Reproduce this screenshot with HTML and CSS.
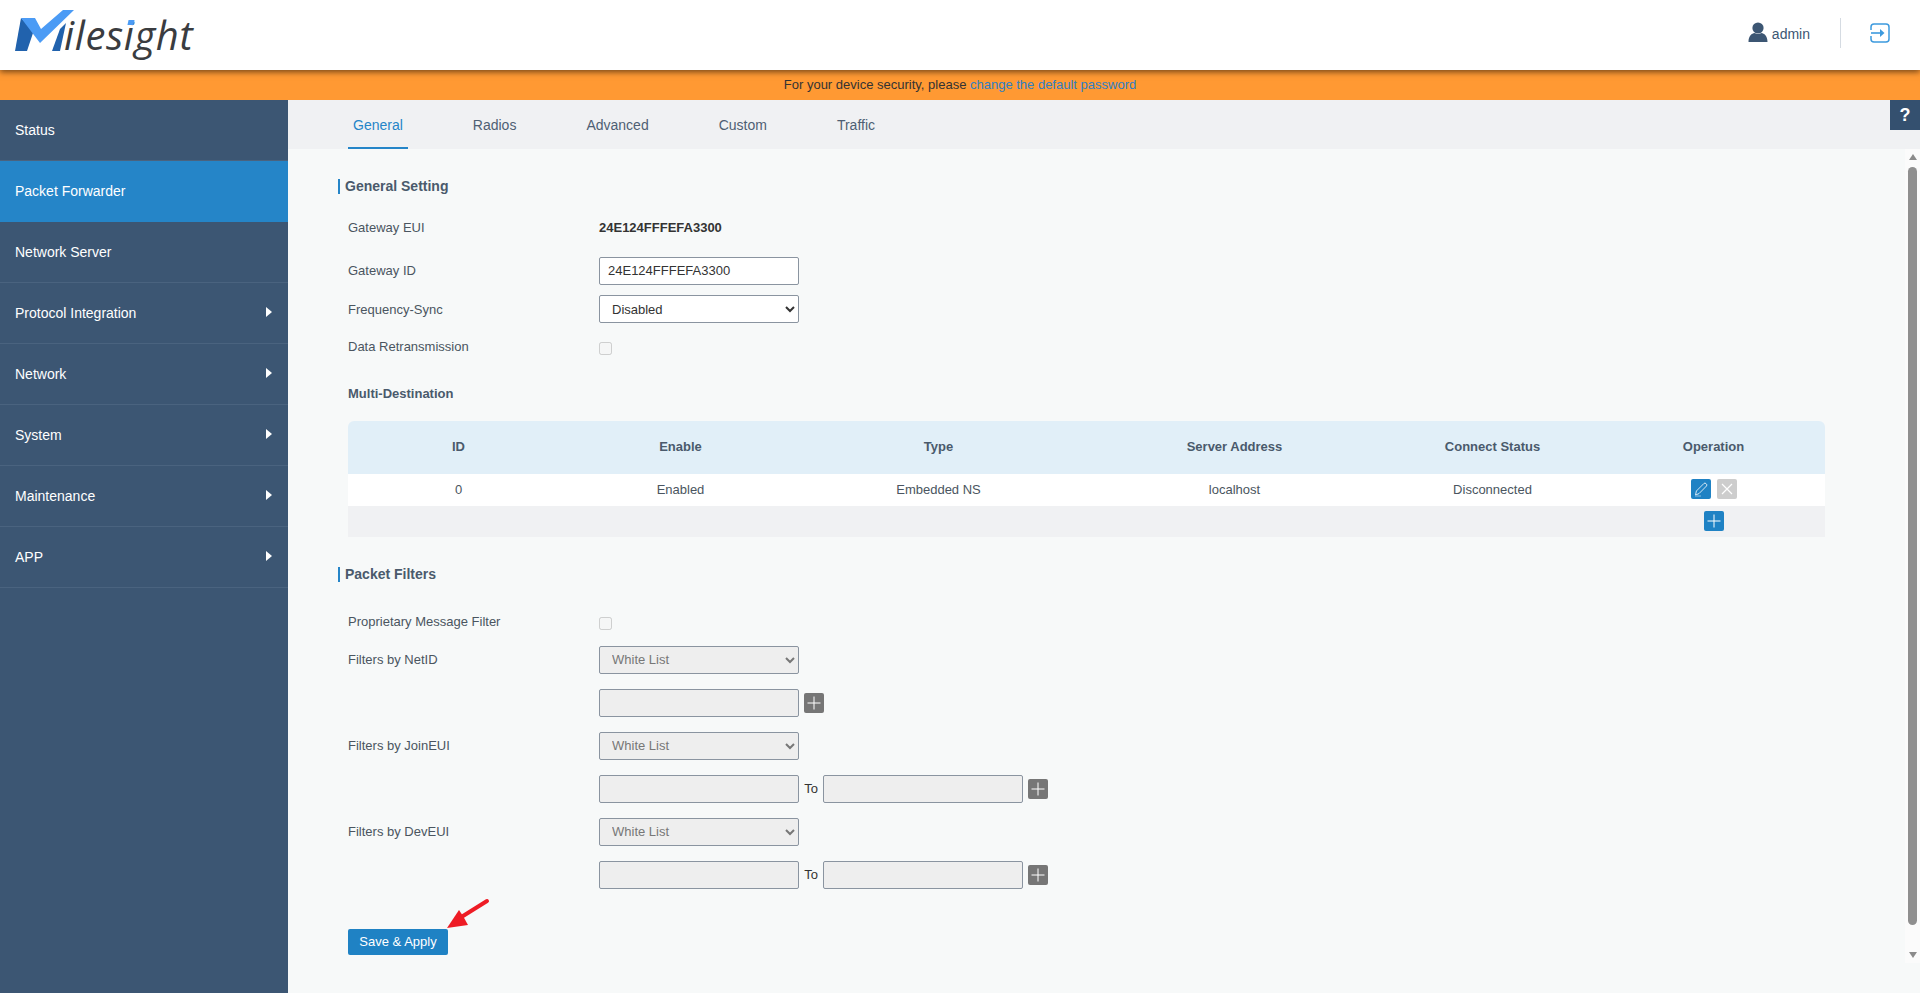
FILE: index.html
```html
<!DOCTYPE html>
<html lang="en">
<head>
<meta charset="utf-8">
<title>Milesight</title>
<link rel="stylesheet" href="styles.css">
</head>
<body>
<header class="topbar">
  <div class="logo">
    <svg class="logo-mark" viewBox="0 0 75 52" width="75" height="52">
      <polygon points="15,51 21,18 34,30 27,51" fill="#2162ad"/>
      <polygon points="52,51 60,29 66,23 60,51" fill="#2162ad"/>
      <polygon points="21,18 35,18 41,29 63,10 74,10 40,43" fill="#4b9bf5"/>
    </svg>
    <span class="logo-text">iles<span class="logo-i">i</span>ght</span>
  </div>
  <div class="user">
    <svg class="user-icon" viewBox="0 0 20 20" width="20" height="20">
      <circle cx="10" cy="6" r="5.6" fill="#3c5673"/>
      <path d="M0.5 20 C0.5 13.5 4 11.5 6.5 11 Q10 13 13.5 11 C16 11.5 19.5 13.5 19.5 20 Z" fill="#3c5673"/>
    </svg>
    <span class="user-name">admin</span>
  </div>
  <div class="divider"></div>
  <svg class="logout" viewBox="0 0 20 20" width="20" height="20">
    <path d="M1 7 V4 Q1 1 4 1 H16 Q19 1 19 4 V16 Q19 19 16 19 H4 Q1 19 1 16 V13" fill="none" stroke="#3d9ade" stroke-width="1.5"/>
    <path d="M1 10 H13" fill="none" stroke="#3d9ade" stroke-width="1.6"/>
    <path d="M10 6 L14.5 10 L10 14 Z" fill="#3d9ade"/>
  </svg>
</header>
<div class="notice">For your device security, please <a class="notice-link">change the default password</a></div>
<div class="main">
  <nav class="sidebar">
    <div class="nav-item">Status</div>
    <div class="nav-item active">Packet Forwarder</div>
    <div class="nav-item">Network Server</div>
    <div class="nav-item has-sub">Protocol Integration</div>
    <div class="nav-item has-sub">Network</div>
    <div class="nav-item has-sub">System</div>
    <div class="nav-item has-sub">Maintenance</div>
    <div class="nav-item has-sub">APP</div>
  </nav>
  <div class="content">
    <div class="tabs">
      <div class="tab active">General</div>
      <div class="tab">Radios</div>
      <div class="tab">Advanced</div>
      <div class="tab">Custom</div>
      <div class="tab">Traffic</div>
    </div>
    <div class="help">?</div>
    <div class="pane">
      <div class="form">
        <h2 class="section first">General Setting</h2>
        <div class="row eui"><label class="lbl">Gateway EUI</label><strong class="val">24E124FFFEFA3300</strong></div>
        <div class="row r-id"><label class="lbl up">Gateway ID</label><input class="field" type="text" value="24E124FFFEFA3300"></div>
        <div class="row r-sync"><label class="lbl">Frequency-Sync</label><select class="field sel"><option>Disabled</option></select></div>
        <div class="row r-check"><label class="lbl">Data Retransmission</label><input class="check" type="checkbox" disabled></div>
        <h3 class="sub">Multi-Destination</h3>
        <table class="grid">
          <colgroup><col class="c1"><col class="c2"><col class="c3"><col class="c4"><col class="c5"><col class="c6"></colgroup>
          <thead><tr><th>ID</th><th>Enable</th><th>Type</th><th>Server Address</th><th>Connect Status</th><th>Operation</th></tr></thead>
          <tbody>
            <tr class="data"><td>0</td><td>Enabled</td><td>Embedded NS</td><td>localhost</td><td>Disconnected</td>
              <td><span class="ops">
                <span class="btn blue"><svg viewBox="0 0 20 20" width="20" height="20"><path d="M4.5 16 L5.4 12 L13 4.4 Q14 3.6 15 4.6 L15.5 5.1 Q16.3 6 15.5 7 L8 14.6 Z" fill="none" stroke="#d6e8f5" stroke-width="1"/><path d="M4 17 H10" stroke="#8fc0e2" stroke-width="1"/></svg></span>
                <span class="btn grey"><svg viewBox="0 0 20 20" width="20" height="20"><path d="M5 5 L15 15 M15 5 L5 15" stroke="#fff" stroke-width="1.2"/></svg></span>
              </span></td></tr>
            <tr class="add"><td></td><td></td><td></td><td></td><td></td>
              <td><span class="ops"><span class="btn blue"><svg viewBox="0 0 20 20" width="20" height="20"><path d="M10 3.5 V16.5 M3.5 10 H16.5" stroke="#fff" stroke-width="1"/></svg></span></span></td></tr>
          </tbody>
        </table>
        <h2 class="section second">Packet Filters</h2>
        <div class="row r-prop"><label class="lbl">Proprietary Message Filter</label><input class="check" type="checkbox" disabled></div>
        <div class="row r-f"><label class="lbl up">Filters by NetID</label><select class="field sel off" disabled><option>White List</option></select></div>
        <div class="row r-g"><span class="lbl"></span><input class="field off" type="text" disabled><span class="btn dark"><svg viewBox="0 0 20 20" width="20" height="20"><path d="M10 3.5 V16.5 M3.5 10 H16.5" stroke="#fff" stroke-width="1"/></svg></span></div>
        <div class="row r-g"><label class="lbl up">Filters by JoinEUI</label><select class="field sel off" disabled><option>White List</option></select></div>
        <div class="row r-g"><span class="lbl"></span><input class="field off" type="text" disabled><span class="to">To</span><input class="field off" type="text" disabled><span class="btn dark"><svg viewBox="0 0 20 20" width="20" height="20"><path d="M10 3.5 V16.5 M3.5 10 H16.5" stroke="#fff" stroke-width="1"/></svg></span></div>
        <div class="row r-g"><label class="lbl up">Filters by DevEUI</label><select class="field sel off" disabled><option>White List</option></select></div>
        <div class="row r-g"><span class="lbl"></span><input class="field off" type="text" disabled><span class="to">To</span><input class="field off" type="text" disabled><span class="btn dark"><svg viewBox="0 0 20 20" width="20" height="20"><path d="M10 3.5 V16.5 M3.5 10 H16.5" stroke="#fff" stroke-width="1"/></svg></span></div>
        <div class="actions">
          <button class="save" type="button">Save &amp; Apply</button>
          <svg class="arrow" viewBox="0 0 44 34" width="44" height="34"><path d="M40 4 L16 19" stroke="#ee1c25" stroke-width="4" stroke-linecap="round"/><polygon points="0,31 12,13 16,19 21,28" fill="#ee1c25"/></svg>
        </div>
      </div>
      <div class="scrollbar">
        <span class="sb-up"></span>
        <span class="sb-thumb"></span>
        <span class="sb-down"></span>
      </div>
    </div>
  </div>
</div>
</body>
</html>
```
FILE: styles.css
```css
* { box-sizing: border-box; }
html, body { margin: 0; height: 100%; overflow: hidden; }
body {
  font-family: "Liberation Sans", Arial, sans-serif;
  font-size: 13px;
  color: #333;
  background: #f7f9f9;
  display: flex;
  flex-direction: column;
  height: 993px;
}
.topbar {
  height: 70px;
  flex: none;
  background: #fff;
  display: flex;
  align-items: center;
  position: relative;
  z-index: 2;
  box-shadow: 0 2px 6px rgba(0, 0, 0, .55);
  padding: 0 30px 4px 0;
}
.logo {
  flex: 1;
  align-self: flex-start;
  height: 70px;
  display: flex;
  align-items: flex-start;
}
.logo-mark { flex: none; }
.logo-text {
  font-family: "Open Sans", sans-serif;
  font-style: italic;
  font-size: 40px;
  line-height: 1;
  letter-spacing: .6px;
  color: #3a3c40;
  margin: 15px 0 0 -11px;
}
.logo-i { position: relative; }
.logo-i::before {
  content: "";
  position: absolute;
  left: 4px;
  top: 13px;
  width: 6px;
  height: 5px;
  background: #4b9bf5;
  transform: skewX(-12deg);
}
.user { display: flex; align-items: center; gap: 4px; color: #3c5673; font-size: 14px; }
.user-icon { margin-top: -2px; }
.user-name { margin-top: 2px; }
.divider { width: 1px; height: 30px; background: #d5dbe2; margin: 0 29px 0 30px; }
.logout { flex: none; }
.notice {
  height: 30px;
  flex: none;
  background: #ff9933;
  text-align: center;
  line-height: 30px;
  font-size: 13px;
  color: #333;
}
.notice-link { color: #2f7fc4; }
.main { flex: 1; display: flex; min-height: 0; }
.sidebar { width: 288px; flex: none; background: #3c5673; }
.nav-item {
  height: 61px;
  line-height: 61px;
  padding-left: 15px;
  color: #fff;
  font-size: 14px;
  border-bottom: 1px solid #4a637f;
  position: relative;
}
.nav-item.active { background: #2585c8; border-bottom-color: #2585c8; }
.has-sub::after {
  content: "";
  position: absolute;
  right: 16px;
  top: 24px;
  border-left: 6px solid #fff;
  border-top: 5.5px solid transparent;
  border-bottom: 5.5px solid transparent;
}
.content { flex: 1; min-width: 0; display: flex; flex-direction: column; position: relative; }
.tabs {
  height: 49px;
  flex: none;
  background: #f0f1f3;
  display: flex;
  padding-left: 60px;
  gap: 60px;
  font-size: 14px;
  color: #4e5f73;
}
.tab { padding: 2px 5px 0; line-height: 47px; }
.tab.active { color: #2585c8; border-bottom: 2px solid #2585c8; }
.help {
  position: absolute;
  top: 0;
  right: 0;
  width: 30px;
  height: 30px;
  background: #34506f;
  color: #fff;
  font-weight: bold;
  font-size: 18px;
  line-height: 30px;
  text-align: center;
}
.pane { display: flex; align-items: flex-start; flex: 1; min-height: 0; }
.form { flex: 1; min-width: 0; padding: 0 0 0 50px; }
.section {
  margin: 0;
  font-size: 14px;
  line-height: 15px;
  font-weight: bold;
  color: #4a5a6c;
  border-left: 2px solid #2585c8;
  padding-left: 5px;
}
.section.first { margin-top: 30px; }
.section.second { margin-top: 30px; }
.row { display: flex; align-items: flex-start; padding-left: 10px; line-height: 15px; color: #4a5560; }
.lbl { width: 251px; flex: none; color: #4a5560; }
.lbl.up { margin-top: -2px; }
.val { color: #333; font-weight: bold; }
.eui { margin-top: 26px; }
.r-id { margin-top: 22px; align-items: center; height: 28px; }
.r-sync { margin-top: 10px; align-items: center; height: 28px; }
.r-check { margin-top: 16px; }
.r-prop { margin-top: 32px; }
.r-f { margin-top: 16px; align-items: center; height: 28px; }
.r-g { margin-top: 15px; align-items: center; height: 28px; }
.field {
  width: 200px;
  height: 28px;
  flex: none;
  border: 1px solid #8a94a0;
  border-radius: 2px;
  background: #fff;
  font-family: inherit;
  font-size: 13px;
  color: #333;
  padding: 0 8px 2px;
  margin: 0;
}
.sel { padding: 0 8px; }
.sel.off { padding-bottom: 2px; }
.off { background: #eee; color: #777; opacity: 1; }
.check {
  width: 13px;
  height: 13px;
  margin: 3px 0 0 0;
}
.sub { margin: 31px 0 0; padding-left: 10px; font-size: 13px; line-height: 15px; font-weight: bold; color: #4a5a6c; }
.grid {
  margin: 20px 0 0 10px;
  width: 1477px;
  border-collapse: collapse;
  table-layout: fixed;
  font-size: 13px;
  color: #4a5560;
}
.c1 { width: 220px; }
.c2 { width: 224px; }
.c3 { width: 292px; }
.c4 { width: 300px; }
.c5 { width: 216px; }
.c6 { width: 225px; }
.grid th { height: 53px; background: #e1eff8; font-weight: bold; color: #4a5a6c; padding: 0 0 2px 1px; text-align: center; }
.grid th:first-child { border-top-left-radius: 6px; }
.grid th:last-child { border-top-right-radius: 6px; padding-left: 2px; }
.grid td { padding: 0 0 2px 1px; text-align: center; }
.grid td:last-child { padding-left: 2px; }
.data td { height: 32px; background: #fff; }
.add td { height: 31px; background: #f0f1f3; }
.ops { display: inline-flex; gap: 6px; vertical-align: middle; }
.btn {
  width: 20px;
  height: 20px;
  flex: none;
  display: block;
  border-radius: 2px;
}
.btn svg { display: block; }
.blue { background: #1f82c4; }
.grey { background: #cdcdcd; }
.dark { background: #767676; margin-left: 5px; }
.to { width: 24px; flex: none; text-align: center; color: #333; margin-top: -2px; }
.actions { position: relative; margin: 40px 0 0 10px; height: 26px; }
.save {
  display: block;
  width: 100px;
  height: 26px;
  background: #1f82c4;
  border: 0;
  border-radius: 2px;
  color: #fff;
  font-family: inherit;
  font-size: 13px;
  padding: 0 0 1px;
}
.arrow { position: absolute; left: 99px; top: -32px; }
.scrollbar {
  width: 15px;
  height: 814px;
  flex: none;
  background: #fbfbfb;
  display: flex;
  flex-direction: column;
  align-items: center;
}
.sb-up, .sb-down { width: 0; height: 0; border-left: 4.5px solid transparent; border-right: 4.5px solid transparent; }
.sb-up { border-bottom: 6px solid #8b8b8b; margin-top: 5px; }
.sb-thumb { width: 9px; height: 758px; margin-top: 7px; border-radius: 4.5px; background: #8f8f8f; }
.sb-down { border-top: 6px solid #8b8b8b; margin-top: 27px; }
```
